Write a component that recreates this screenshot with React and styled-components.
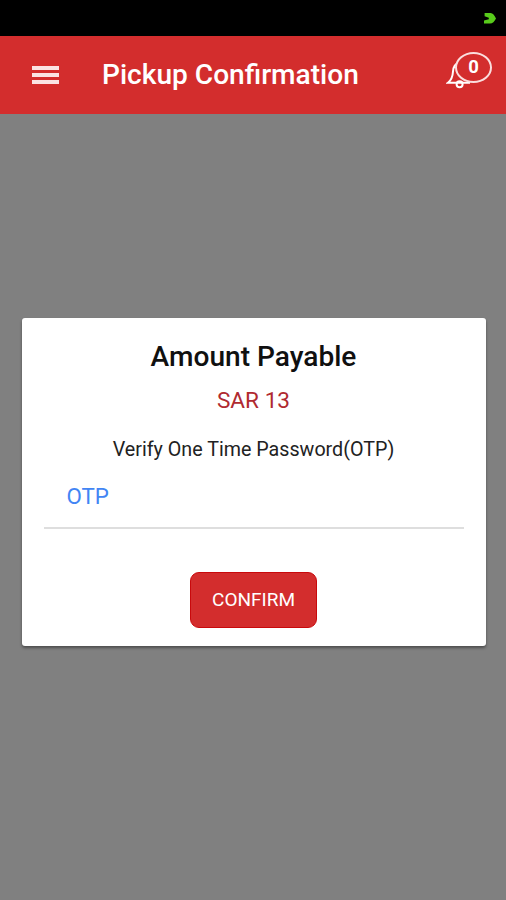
import React from 'react';
import styled, { createGlobalStyle } from 'styled-components';

const Colors = {
  primary: '#d32d2d',
  primaryEdge: '#c9090c',
  backdrop: '#808080',
  white: '#ffffff',
  badgeOutline: '#fbdede',
  darkText: '#101010',
  bodyText: '#222222',
  amount: '#b02a30',
  link: '#4285f4',
  outline: '#dedede',
  status: '#58cb1b'
};

const GlobalStyle = createGlobalStyle`
  * {
    box-sizing: border-box;
  }

  body {
    margin: 0;
    font-family: Roboto, 'Liberation Sans', sans-serif;
    background-color: ${Colors.backdrop};
  }
`;

const Screen = styled.div`
  display: flex;
  flex-direction: column;
  height: 900px;
  background-color: ${Colors.backdrop};
  overflow: hidden;
`;

const StatusBar = styled.div`
  height: 36px;
  flex-shrink: 0;
  display: flex;
  justify-content: flex-end;
  align-items: center;
  padding-right: 10px;
  background-color: #000;
`;

const Header = styled.header`
  height: 78px;
  flex-shrink: 0;
  display: flex;
  align-items: center;
  padding: 0 14px 0 32px;
  background-color: ${Colors.primary};
  color: ${Colors.white};
`;

const MenuButton = styled.button`
  display: flex;
  flex-direction: column;
  gap: 3px;
  width: 27px;
  padding: 0;
  border: 0;
  background: none;
`;

const MenuLine = styled.span`
  height: 4px;
  background-color: #fbe3e3;
`;

const Title = styled.h1`
  flex: 1;
  margin: 0 0 0 43px;
  font-size: 28.1px;
  font-weight: 500;
  line-height: 36px;
  white-space: nowrap;
`;

const Notifications = styled.div`
  position: relative;
  width: 46px;
  height: 46px;
`;

const BellIcon = styled.svg`
  display: block;
`;

const Badge = styled.span`
  position: absolute;
  top: 0;
  right: 0;
  width: 37px;
  height: 31px;
  display: flex;
  align-items: center;
  justify-content: center;
  padding-bottom: 2px;
  border: 2px solid ${Colors.badgeOutline};
  border-radius: 50%;
  background-color: ${Colors.primary};
  font-size: 18.5px;
  font-weight: 700;
`;

const Content = styled.main`
  flex: 1;
  padding: 203.5px 20.5px 0 21.5px;
`;

const Dialog = styled.section`
  height: 328px;
  display: flex;
  flex-direction: column;
  align-items: center;
  padding: 20px 22px 18px;
  border-radius: 3px;
  background-color: ${Colors.white};
  box-shadow: 0 2px 3px rgba(0, 0, 0, 0.4);
`;

const DialogTitle = styled.h2`
  margin: 0;
  color: ${Colors.darkText};
  font-size: 28.1px;
  font-weight: 500;
  line-height: 38px;
`;

const Amount = styled.div`
  margin-top: 10px;
  color: ${Colors.amount};
  font-size: 22.6px;
  line-height: 30px;
`;

const Instruction = styled.p`
  margin: 21px 0 0;
  color: ${Colors.bodyText};
  font-size: 19.7px;
  line-height: 26px;
`;

const Field = styled.label`
  width: 100%;
  margin-top: 15px;
  padding: 5px 23px 18px;
  border-bottom: 2px solid ${Colors.outline};
  color: ${Colors.link};
  font-size: 22.3px;
  line-height: 26px;
`;

const ConfirmButton = styled.button`
  width: 127px;
  height: 56px;
  margin-top: 43px;
  padding: 0;
  border: 1px solid ${Colors.primaryEdge};
  border-radius: 9px;
  background-color: ${Colors.primary};
  color: ${Colors.white};
  font-family: inherit;
  font-size: 19px;
`;

const StatusIcon = () => (
  <svg width="12" height="11" viewBox="0 0 12 11">
    <path
      d="M.6 0H6.5C9 .2 10.3 2 12 5.5 10.5 8.5 8.5 10.6 6 10.6H0V7.6L4.8 6.2V4.8L.6 3.2Z"
      fill={Colors.status}
    />
  </svg>
);

const NotificationBell = ({ count }) => (
  <Notifications>
    <BellIcon
      width="46"
      height="46"
      viewBox="0 0 46 46"
      fill="none"
      stroke={Colors.white}
      strokeWidth="2"
    >
      <path d="M13 11C8.5 12 7.3 15 7 19.5C6.7 25 5.5 28 2 30.7H24" />
      <circle cx="13.6" cy="32.2" r="3" />
    </BellIcon>
    <Badge>{count}</Badge>
  </Notifications>
);

export const OtpDialog = props => {
  return (
    <Dialog>
      <DialogTitle>Amount Payable</DialogTitle>
      <Amount>SAR {props.amount}</Amount>
      <Instruction>Verify One Time Password(OTP)</Instruction>
      <Field>OTP</Field>
      <ConfirmButton>CONFIRM</ConfirmButton>
    </Dialog>
  );
};

const App = () => {
  return (
    <Screen>
      <GlobalStyle />
      <StatusBar>
        <StatusIcon />
      </StatusBar>
      <Header>
        <MenuButton aria-label="Menu">
          <MenuLine />
          <MenuLine />
          <MenuLine />
        </MenuButton>
        <Title>Pickup Confirmation</Title>
        <NotificationBell count={0} />
      </Header>
      <Content>
        <OtpDialog amount={13} />
      </Content>
    </Screen>
  );
};

export default App;
